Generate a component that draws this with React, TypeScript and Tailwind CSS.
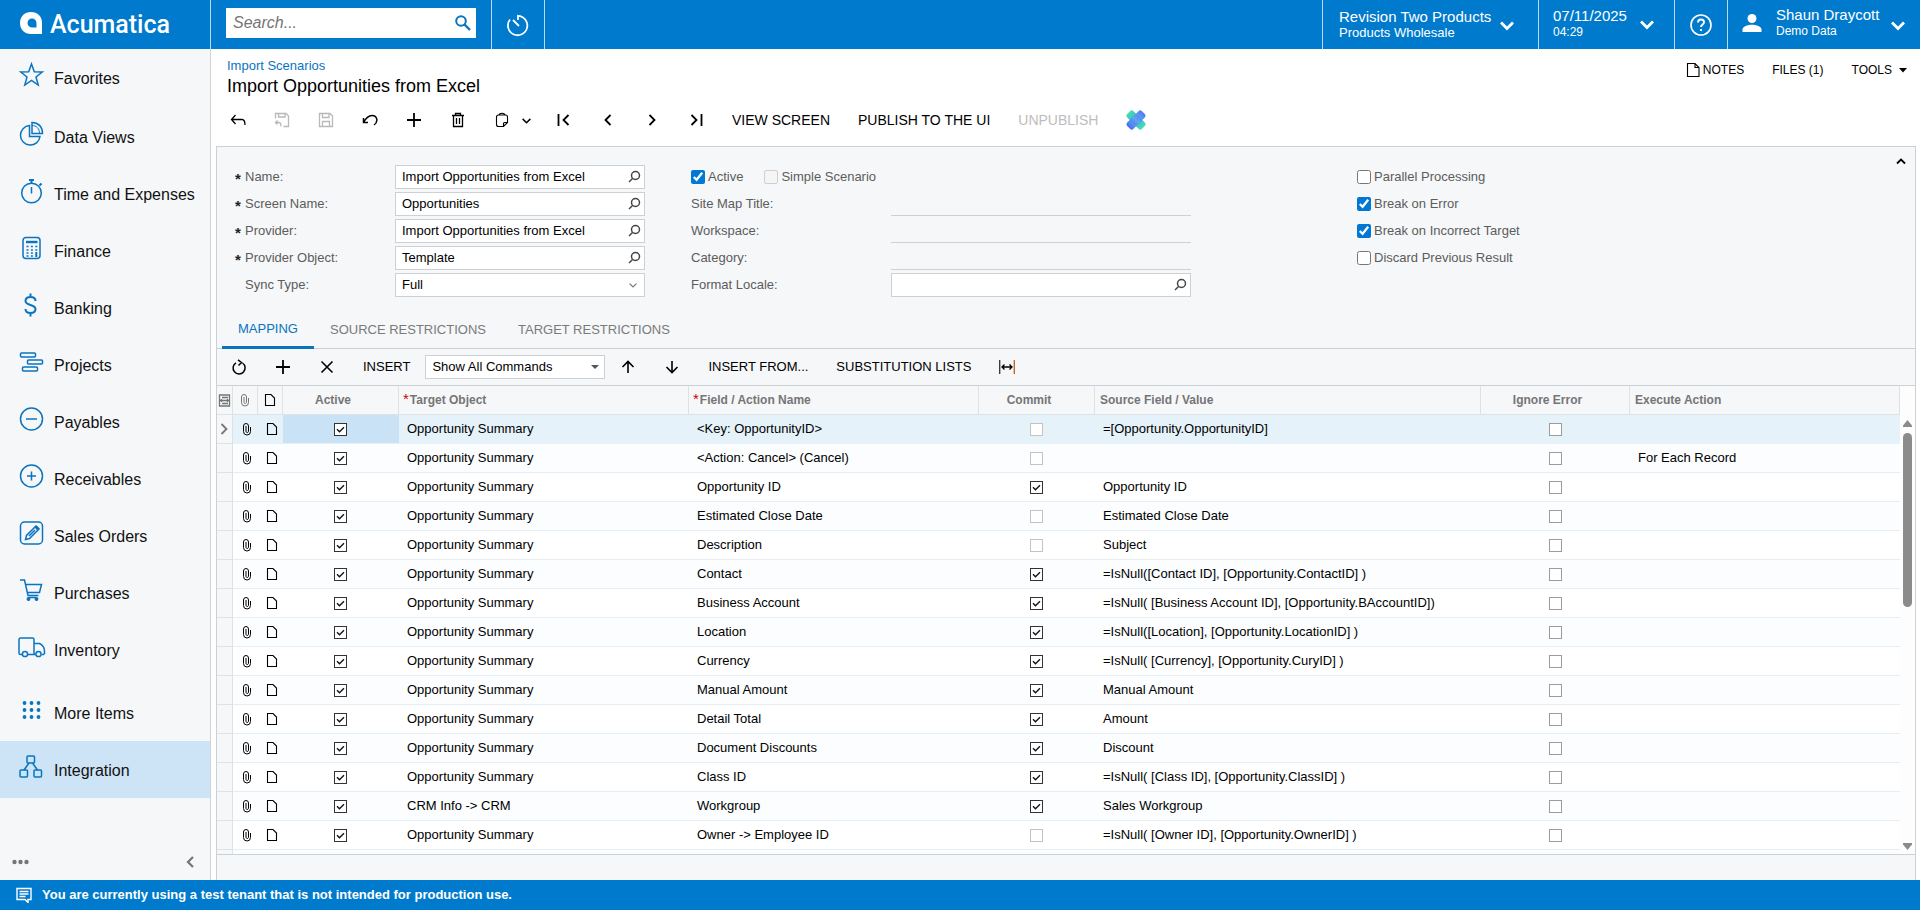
import type { ReactNode } from "react"

type IconProps = { size?: number; width?: number; className?: string; children: ReactNode }

function Icon({ size = 16, width = 1.3, className = "", children }: IconProps) {
  return (
    <svg
      width={size}
      height={size}
      viewBox={`0 0 ${size} ${size}`}
      fill="none"
      stroke="currentColor"
      strokeWidth={width}
      className={`shrink-0 ${className}`}
      aria-hidden="true"
    >
      {children}
    </svg>
  )
}

const ChevronDown = ({ size = 14, width = 2.8 }: { size?: number; width?: number }) => (
  <svg width={size} height={size} viewBox="0 0 14 14" fill="none" stroke="currentColor" strokeWidth={width} className="shrink-0" aria-hidden="true">
    <path d="M1 4.5 7 10.500l6-6" />
  </svg>
)

const LookupIcon = () => (
  <Icon width={1.5} className="text-[#444]">
    <circle cx="9.5" cy="6.5" r="4" />
    <path d="M6.5 9.5 3 13" />
  </Icon>
)

const ClipIcon = () => (
  <Icon width={1}>
    <path d="M4.500 5v5.500a3.500 3.500 0 0 0 7 0V6M4.500 5a2.500 2.500 0 0 1 5 0v5.500a1.300 1.300 0 0 1-2.500 0V5" />
  </Icon>
)

const PageIcon = () => (
  <Icon width={1.1}>
    <path d="M3.500 2.500h5.500l3.500 3.500v7.500h-9z" />
  </Icon>
)

// ---- sidebar ----

type NavItem = { label: string; icon: ReactNode; active?: boolean; space?: string }

const navItems: NavItem[] = [
  {
    label: "Favorites",
    space: "mb-0.5",
    icon: <path d="m13.500 3 2.800 7.700 8 .3-6.300 5 2.200 8-6.700-4.500L6.800 24 9 16l-6.300-5 8-.3z" />,
  },
  {
    label: "Data Views",
    icon: (
      <>
        <path d="M11.500 5.500a9.800 9.800 0 1 0 10.500 11H11.500z" />
        <path d="M14 2.500c6 0 10.500 4 10.500 11H14z" />
        <path d="M14 5.500c4.500 0 7.500 3 7.500 8" strokeWidth="1" />
      </>
    ),
  },
  {
    label: "Time and Expenses",
    icon: (
      <>
        <circle cx="13.500" cy="16" r="9.800" />
        <path d="M13.500 10v6.500" />
        <path d="M11 3h5M13.500 3v3M21.500 8.500l2-2" strokeWidth="2" />
      </>
    ),
  },
  {
    label: "Finance",
    icon: (
      <>
        <rect x="5" y="3.500" width="17" height="21" rx="3" />
        <path d="M8 8h11.500" strokeWidth="2.400" />
        <path d="M8.500 12.500h11M8.500 16h11M8.500 19h7M8.500 22h7" strokeWidth="1.700" strokeDasharray="2 2.400" />
        <path d="M18.300 18v5" strokeWidth="2" />
      </>
    ),
  },
  {
    label: "Banking",
    icon: (
      <path
        d="M12.500 2.500v4M12.500 21.500v4M17.500 10c0-2.500-2-4-5-4s-5 1.500-5 4c0 5 10 3 10 8 0 2.500-2 4-5 4s-5-1.500-5-4"
        strokeWidth="2"
      />
    ),
  },
  {
    label: "Projects",
    icon: (
      <>
        <rect x="2.500" y="5" width="15" height="4" rx="1" />
        <rect x="9.500" y="12" width="15" height="4" rx="1" />
        <rect x="4.500" y="19" width="15" height="4" rx="1" />
      </>
    ),
  },
  {
    label: "Payables",
    icon: (
      <>
        <circle cx="13.500" cy="14" r="11" />
        <path d="M8 14h11" />
      </>
    ),
  },
  {
    label: "Receivables",
    icon: (
      <>
        <circle cx="13.500" cy="14" r="11" />
        <path d="M9 14h9M13.500 9.500v9" />
      </>
    ),
  },
  {
    label: "Sales Orders",
    icon: (
      <>
        <rect x="2.500" y="3" width="22" height="22" rx="4" />
        <path d="m7.500 20.500 1-4 9.500-9.500 3 3-9.500 9.500zM11 17l6-6" />
        <path d="m17.500 7.500 3 3" strokeWidth="3" />
      </>
    ),
  },
  {
    label: "Purchases",
    icon: (
      <>
        <path d="M2 4h4.500l3.500 15.500h10.500M7.500 8.500h16l-2 8H9.500" />
        <circle cx="10.500" cy="23" r="1.200" fill="currentColor" />
        <circle cx="18.500" cy="23" r="1.200" fill="currentColor" />
        <path d="M10.500 21.500h8" />
      </>
    ),
  },
  {
    label: "Inventory",
    space: "mb-1.5",
    icon: (
      <>
        <path d="M4 21.500H2.500a1.500 1.500 0 0 1-1.500-1.500V6.500A1.500 1.500 0 0 1 2.500 5h12A1.500 1.500 0 0 1 16 6.500v15M10 21.500h7.500M16 10.500h5.500c3 1.500 5 4 5 7.500v2.500l-1 1H24" />
        <circle cx="7" cy="21" r="2.600" />
        <circle cx="20.500" cy="21" r="2.600" />
      </>
    ),
  },
  {
    label: "More Items",
    icon: (
      <g fill="currentColor" stroke="none">
        {[7, 14, 21].map((y) => [6.5, 13.5, 20.5].map((x) => <circle key={`${x}-${y}`} cx={x} cy={y} r="1.900" />))}
      </g>
    ),
  },
  {
    label: "Integration",
    active: true,
    icon: (
      <>
        <rect x="9" y="3" width="7.500" height="7" rx="1" />
        <rect x="2" y="17" width="7.500" height="7" rx="1" />
        <rect x="16" y="17" width="7.500" height="7" rx="1" />
        <path d="m11 10-5 7M14.500 10l5 7" />
      </>
    ),
  },
]

function Sidebar() {
  return (
    <nav className="w-[211px] shrink-0 flex flex-col justify-between bg-[#f5f7f9] border-r border-[#cfd3d7]">
      <ul>
        {navItems.map((item) => (
          <li key={item.label} className={item.space}>
            <a
              href="#"
              className={`flex items-center gap-2 h-[57px] pl-[18px] text-base text-[#111] ${item.active ? "bg-[#cce4f6]" : ""}`}
            >
              <Icon size={28} width={1.5} className="text-[#0a74bf] mb-1.5">
                {item.icon}
              </Icon>
              <span className="whitespace-nowrap pt-0.5">{item.label}</span>
            </a>
          </li>
        ))}
      </ul>
      <div className="flex justify-between items-center h-9 pl-3 pr-[13px] text-[#757575]">
        <button aria-label="More">
          <svg width="17" height="6" viewBox="0 0 17 6" fill="currentColor" className="block">
            <circle cx="2.500" cy="3" r="2.200" />
            <circle cx="8.500" cy="3" r="2.200" />
            <circle cx="14.500" cy="3" r="2.200" />
          </svg>
        </button>
        <button aria-label="Collapse menu">
          <Icon size={14} width={2.2}>
            <path d="M10 2 5 7l5 5" />
          </Icon>
        </button>
      </div>
    </nav>
  )
}

// ---- top bar ----

function TopBar() {
  return (
    <header className="flex h-[49px] shrink-0 bg-[#007acc] text-white">
      <a href="#" className="w-[211px] flex items-center gap-2 pl-5 border-r border-[#b5dcf5]">
        <svg width="22" height="22" viewBox="0 0 22 22" className="-mt-1" aria-hidden="true">
          <path
            fill="currentColor"
            fillRule="evenodd"
            d="M11 0c6.500 0 11 4.500 11 10.500V22H11C4.500 22 0 17.500 0 11S4.500 0 11 0zm1 6.500C9.500 6.500 7.500 8.500 7.500 11c0 2.800 2 4.500 5 4.500H16.500V11c0-2.500-2-4.500-4.500-4.500z"
          />
        </svg>
        <span className="font-['Roboto'] font-medium text-[25px] leading-7">Acumatica</span>
      </a>
      <div className="flex items-center w-[281px] pl-[15px] pb-[3px] border-r border-[#b5dcf5]">
        <form className="flex items-center w-[250px] h-[30px] bg-white pl-[7px] pr-1">
          <input
            type="search"
            aria-label="Search"
            placeholder="Search..."
            className="flex-1 min-w-0 text-base italic text-black placeholder:text-[#757575] outline-none"
          />
          <button type="button" aria-label="Search" className="text-[#0a74bf]">
            <Icon size={18} width={2}>
              <circle cx="7" cy="7" r="4.800" />
              <path d="m10.500 10.500 5.500 5.500" strokeWidth="2.400" />
            </Icon>
          </button>
        </form>
      </div>
      <button aria-label="Recent" className="w-[53px] flex items-center justify-center border-r border-[#b5dcf5]">
        <Icon size={24} width={1.8}>
          <path d="M12 7V2.800A9.700 9.700 0 1 1 4 6.500M7 7l6 6" />
        </Icon>
      </button>
      <div className="flex-1" />
      <button className="flex items-center justify-between w-[216px] pl-4 pr-6 border-l border-[#b5dcf5] text-left">
        <span className="whitespace-nowrap">
          <span className="block text-[15px] leading-4">Revision Two Products</span>
          <span className="block text-[13px] leading-4">Products Wholesale</span>
        </span>
        <ChevronDown />
      </button>
      <button className="flex items-center justify-between w-[136px] pl-[14px] pr-5 pb-0.5 border-l border-[#b5dcf5] text-left">
        <span>
          <span className="block text-[15px] leading-[17px]">07/11/2025</span>
          <span className="block text-[12px] leading-[17px]">04:29</span>
        </span>
        <ChevronDown />
      </button>
      <button aria-label="Help" className="w-[53px] flex items-center justify-center border-l border-[#b5dcf5]">
        <Icon size={24} width={1.6}>
          <circle cx="12" cy="12" r="10" />
          <path d="M9 9.500c0-1.900 1.300-3 3-3s3 1.100 3 2.700c0 2.200-3 2.300-3 4.800M12 16v2" strokeWidth="1.900" />
        </Icon>
      </button>
      <button className="flex items-center w-[193px] pl-[14px] pr-[15px] border-l border-[#b5dcf5] text-left">
        <svg width="20" height="20" viewBox="0 0 20 20" fill="currentColor" className="shrink-0 mb-1" aria-hidden="true">
          <circle cx="10" cy="5.500" r="4.500" />
          <path d="M0.500 19v-2.500c0-3 5-4.700 9.500-4.700s9.500 1.700 9.500 4.700V19z" />
        </svg>
        <span className="flex-1 pl-[14px] whitespace-nowrap pb-1">
          <span className="block text-[15px] leading-[17px]">Shaun Draycott</span>
          <span className="block text-[12px] leading-[17px]">Demo Data</span>
        </span>
        <ChevronDown />
      </button>
    </header>
  )
}

// ---- page title and actions ----

type Action = { name: string; icon: ReactNode; disabled?: boolean }

const leadingActions: Action[] = [
  { name: "Back", icon: <path d="M5.500 3 1.500 7.500l4 4.500M1.500 7.500h10.500c2 0 3 1.500 3 5.500" /> },
  {
    name: "Save and close",
    disabled: true,
    icon: <path d="M1.500 6.500v-5h10.500l2.500 2.500v10.500H9.500M4.500 1.500v3.500h6.500v-3.500M3.500 8.500l-2 2 2 2M1.500 10.500h3.500c1.500 0 2 1.500 2 4" />,
  },
  {
    name: "Save",
    disabled: true,
    icon: <path d="M1.500 1.500h10.500l2.500 2.500v10.500h-13zM4.500 1.500v4h6.500v-4M4.500 14.500V9.500h7v5" />,
  },
  { name: "Undo", icon: <path d="M1.500 6v4.500h4.500M1.500 10.500C4 6 6.500 3.500 10 3.500c5.500 0 6.500 6.500 2 9.500" strokeWidth="1.500" /> },
  { name: "Add", icon: <path d="M8 1v14M1 8h14" strokeWidth="1.800" /> },
  { name: "Delete", icon: <path d="M2 3.500h12M5.500 3.500v-2h5v2M3.500 3.500v11h9v-11M6.500 6v6M9.500 6v6" /> },
]

const pagingActions: Action[] = [
  { name: "First", icon: <path d="M2.500 2v12M12.500 3l-5 5 5 5" strokeWidth="1.800" /> },
  { name: "Previous", icon: <path d="m10.500 3-5 5 5 5" strokeWidth="1.800" /> },
  { name: "Next", icon: <path d="m5.500 3 5 5-5 5" strokeWidth="1.800" /> },
  { name: "Last", icon: <path d="M13.500 2v12M3.500 3l5 5-5 5" strokeWidth="1.800" /> },
]

function IconButton({ name, icon, disabled }: Action) {
  return (
    <button
      aria-label={name}
      disabled={disabled}
      className="w-11 h-9 shrink-0 flex items-center justify-center disabled:text-[#b9b9b9]"
    >
      <Icon>{icon}</Icon>
    </button>
  )
}

function PageHeader() {
  return (
    <div className="pt-2 pb-1 pl-[5px]">
      <div className="flex justify-between pl-[11px] pr-[13px]">
        <div>
          <a href="#" className="block w-fit text-[13px] leading-[17px] text-[#0a74bf]">
            Import Scenarios
          </a>
          <h1 className="text-lg leading-6">Import Opportunities from Excel</h1>
        </div>
        <div className="flex items-center gap-7 h-4 mt-[5px] text-[12px]">
          <button className="flex items-center gap-px">
            <Icon width={1.1}>
              <path d="M1.500 1.500h7.500l4 4v9H1.500zM9 1.500v4h4" />
            </Icon>
            NOTES
          </button>
          <button>FILES (1)</button>
          <button className="flex items-center gap-[7px]">
            TOOLS
            <svg width="8" height="5" viewBox="0 0 8 5" fill="currentColor" aria-hidden="true">
              <path d="M0 0h8L4 4.500z" />
            </svg>
          </button>
        </div>
      </div>
      <div className="flex items-center h-11 text-sm whitespace-nowrap">
        {leadingActions.map((action) => (
          <IconButton key={action.name} {...action} />
        ))}
        <button aria-label="Clipboard" className="w-[62px] h-9 flex items-center gap-[11px] pl-[15px]">
          <Icon width={1.1}>
            <path d="M8.500 14.500H3.500a2 2 0 0 1-2-2V5a2 2 0 0 1 2-2h7a2 2 0 0 1 2 2v5.500zM8.500 14.500v-3a1 1 0 0 1 1-1h3M4 3.500c0-3 6-3 6 0" />
          </Icon>
          <ChevronDown size={9} width={2.3} />
        </button>
        {pagingActions.map((action) => (
          <IconButton key={action.name} {...action} />
        ))}
        <button className="px-[14px]">VIEW SCREEN</button>
        <button className="px-[14px]">PUBLISH TO THE UI</button>
        <button disabled className="px-[14px] text-[#bdbdbd]">
          UNPUBLISH
        </button>
        <button aria-label="Assistant" className="w-12 flex justify-center">
          <svg width="22" height="22" viewBox="0 0 22 22" aria-hidden="true">
            <defs>
              <linearGradient id="teal">
                <stop offset="0" stopColor="#3fe8a4" />
                <stop offset="0.500" stopColor="#4a9fe6" />
                <stop offset="1" stopColor="#3fe8b0" />
              </linearGradient>
              <linearGradient id="blue">
                <stop offset="0" stopColor="#2f5ff0" />
                <stop offset="0.500" stopColor="#62a4f2" />
                <stop offset="1" stopColor="#3a6df0" />
              </linearGradient>
            </defs>
            <rect x="0.500" y="6.500" width="21" height="9" rx="2.500" fill="url(#teal)" transform="rotate(45 11 11)" />
            <rect x="0.500" y="6.500" width="21" height="9" rx="2.500" fill="url(#blue)" fillOpacity="0.900" transform="rotate(-45 11 11)" />
          </svg>
        </button>
      </div>
    </div>
  )
}

// ---- summary form ----

function Label({ id, text }: { id: string; text: string }) {
  return (
    <label htmlFor={id} className="flex h-6 items-center text-[#5c5c5c]">
      {text}
    </label>
  )
}

function Lookup({ id, value }: { id: string; value: string }) {
  return (
    <div className="flex items-center h-6 bg-white border border-[#ccd1d6] pl-1.5 pr-0.5">
      <input id={id} defaultValue={value} className="flex-1 min-w-0 outline-none" />
      <button aria-label="Look up">
        <LookupIcon />
      </button>
    </div>
  )
}

function Check({ id, text, checked, disabled }: { id: string; text: string; checked?: boolean; disabled?: boolean }) {
  return (
    <div className="flex items-center h-6 gap-[3px]">
      <input id={id} type="checkbox" defaultChecked={checked} disabled={disabled} className="size-[14px] accent-[#0078d4]" />
      <label htmlFor={id} className="text-[#5c5c5c] whitespace-nowrap">
        {text}
      </label>
    </div>
  )
}

const lookups = [
  { id: "name", label: "Name:", value: "Import Opportunities from Excel" },
  { id: "screen", label: "Screen Name:", value: "Opportunities" },
  { id: "provider", label: "Provider:", value: "Import Opportunities from Excel" },
  { id: "object", label: "Provider Object:", value: "Template" },
]

const readOnlyFields = [
  { id: "siteMapTitle", label: "Site Map Title:" },
  { id: "workspace", label: "Workspace:" },
  { id: "category", label: "Category:" },
]

function SummaryForm() {
  return (
    <section className="flex text-[13px] pt-[18px] pl-[18px]">
      <div className="grid grid-cols-[10px_150px_250px] auto-rows-[24px] gap-y-[3px] mr-[46px]">
        {lookups.map((f) => (
          <div key={f.id} className="contents">
            <span className="flex h-6 items-center pt-1 font-bold text-[15px] text-[#222]" aria-hidden="true">
              *
            </span>
            <Label id={f.id} text={f.label} />
            <Lookup id={f.id} value={f.value} />
          </div>
        ))}
        <span />
        <Label id="sync" text="Sync Type:" />
        <div className="relative">
          <select id="sync" className="appearance-none w-full h-6 bg-white border border-[#ccd1d6] px-1.5 outline-none">
            <option>Full</option>
          </select>
          <span className="absolute right-2 top-2 text-[#777] pointer-events-none">
            <ChevronDown size={8} width={2} />
          </span>
        </div>
      </div>
      <div className="grid grid-cols-[200px_300px] auto-rows-[24px] gap-y-[3px] mr-[166px]">
        <div className="col-span-2 flex gap-[21px]">
          <Check id="active" text="Active" checked />
          <Check id="simple" text="Simple Scenario" disabled />
        </div>
        {readOnlyFields.map((f) => (
          <div key={f.id} className="contents">
            <Label id={f.id} text={f.label} />
            <input id={f.id} readOnly className="h-6 border-b border-[#ccd1d6] outline-none" />
          </div>
        ))}
        <Label id="locale" text="Format Locale:" />
        <Lookup id="locale" value="" />
      </div>
      <div className="flex flex-col gap-[3px]">
        <Check id="parallel" text="Parallel Processing" />
        <Check id="breakError" text="Break on Error" checked />
        <Check id="breakTarget" text="Break on Incorrect Target" checked />
        <Check id="discard" text="Discard Previous Result" />
      </div>
      <button aria-label="Collapse" className="ml-auto mr-[9px] -mt-2.5 h-3">
        <Icon size={10} width={1.8}>
          <path d="M1 7.500 5 3.500l4 4" />
        </Icon>
      </button>
    </section>
  )
}

// ---- mapping grid ----

type Row = { object?: string; field: string; commit?: boolean; source?: string; action?: string }

const rows: Row[] = [
  { field: "<Key: OpportunityID>", source: "=[Opportunity.OpportunityID]" },
  { field: "<Action: Cancel> (Cancel)", action: "For Each Record" },
  { field: "Opportunity ID", commit: true, source: "Opportunity ID" },
  { field: "Estimated Close Date", source: "Estimated Close Date" },
  { field: "Description", source: "Subject" },
  { field: "Contact", commit: true, source: "=IsNull([Contact ID], [Opportunity.ContactID] )" },
  { field: "Business Account", commit: true, source: "=IsNull( [Business Account ID], [Opportunity.BAccountID])" },
  { field: "Location", commit: true, source: "=IsNull([Location], [Opportunity.LocationID] )" },
  { field: "Currency", commit: true, source: "=IsNull( [Currency], [Opportunity.CuryID] )" },
  { field: "Manual Amount", commit: true, source: "Manual Amount" },
  { field: "Detail Total", commit: true, source: "Amount" },
  { field: "Document Discounts", commit: true, source: "Discount" },
  { field: "Class ID", commit: true, source: "=IsNull( [Class ID], [Opportunity.ClassID] )" },
  { object: "CRM Info -> CRM", field: "Workgroup", commit: true, source: "Sales Workgroup" },
  { field: "Owner -> Employee ID", source: "=IsNull( [Owner ID], [Opportunity.OwnerID] )" },
]

function GridCheck({ label, checked, faint }: { label: string; checked?: boolean; faint?: boolean }) {
  const border = checked ? "border-[#333]" : faint ? "border-[#c3c3c3]" : "border-[#9c9c9c]"
  return (
    <span className="relative block size-[13px] mx-auto">
      <input type="checkbox" aria-label={label} defaultChecked={checked} className={`appearance-none block size-[13px] bg-white border ${border}`} />
      {checked && (
        <svg width="13" height="13" viewBox="0 0 13 13" className="absolute inset-0 pointer-events-none" fill="none" stroke="#111" strokeWidth="1.400">
          <path d="m3 6.300 2.500 2.500 4.500-4.500" />
        </svg>
      )}
    </span>
  )
}

function GridToolbar() {
  return (
    <div className="flex items-center h-[37px] shrink-0 border-b border-[#ccd1d6] text-[13px] whitespace-nowrap">
      <IconButton name="Refresh" icon={<path d="M5 3.800a6 6 0 1 0 6.500.2M7 .8l3.500 2.700L7.500 6.500" strokeWidth="1.500" />} />
      <IconButton name="Add row" icon={<path d="M8 1v14M1 8h14" strokeWidth="1.800" />} />
      <IconButton name="Delete row" icon={<path d="m2.500 2.500 11 11M13.500 2.500l-11 11" strokeWidth="1.600" />} />
      <button className="px-[14px]">INSERT</button>
      <div className="relative mx-px">
        <select aria-label="Commands" className="appearance-none block w-[180px] h-6 bg-white border border-[#ccd1d6] px-1.5 outline-none">
          <option>Show All Commands</option>
        </select>
        <svg width="8" height="4" viewBox="0 0 8 4" fill="#555" className="absolute right-1.5 top-2.5 pointer-events-none">
          <path d="M0 0h8L4 4z" />
        </svg>
      </div>
      <IconButton name="Move up" icon={<path d="M8 14V2.500M2.500 8 8 2.500 13.500 8" strokeWidth="1.600" />} />
      <IconButton name="Move down" icon={<path d="M8 2v11.500M2.500 8 8 13.500 13.500 8" strokeWidth="1.600" />} />
      <button className="px-[14px]">INSERT FROM...</button>
      <button className="px-[14px]">SUBSTITUTION LISTS</button>
      <IconButton
        name="Fit columns"
        icon={
          <>
            <path d="M0.700 1v14" stroke="#333" />
            <path d="M15.300 1v14" stroke="#b5651d" />
            <path d="M3 8h10M5.500 5.500 3 8l2.500 2.500M10.500 5.500 13 8l-2.500 2.500" />
          </>
        }
      />
    </div>
  )
}

const Required = () => <span className="text-[#d40000] font-normal text-[15px] leading-3 mr-px">*</span>

function MappingGrid() {
  const th = "h-[29px] p-0 border-b border-r border-[#dde2e6] bg-[#f5f7f9] font-bold"
  const gutter = "p-0 border-b border-r border-[#dde2e6] bg-[#f5f7f9]"
  return (
    <div className="flex flex-1 min-h-0 bg-white">
      <div className="flex-1 overflow-hidden">
        <table className="w-full table-fixed border-separate border-spacing-0 text-[13px] whitespace-nowrap">
          <colgroup>
            <col className="w-[16px]" />
            <col className="w-[25px]" />
            <col className="w-[25px]" />
            <col className="w-[116px]" />
            <col className="w-[290px]" />
            <col className="w-[290px]" />
            <col className="w-[116px]" />
            <col className="w-[386px]" />
            <col className="w-[149px]" />
            <col />
          </colgroup>
          <thead className="text-[12px] text-[#757575] text-left">
            <tr>
              <th className={th}>
                <Icon size={13} width={1.3} className="ml-px">
                  <path d="M1.500 1h10v11h-10zM4 3.500h6M1.500 6.500h10M4 9.500h6" />
                  <path d="M3.500 5v3M9.500 5v3" />
                </Icon>
              </th>
              <th className={th}>
                <span className="flex justify-center">
                  <ClipIcon />
                </span>
              </th>
              <th className={th}>
                <span className="flex justify-center text-black">
                  <PageIcon />
                </span>
              </th>
              <th className={`${th} text-center`}>
                <span className="pr-[15px]">Active</span>
              </th>
              <th className={`${th} pl-1`}>
                <Required />
                Target Object
              </th>
              <th className={`${th} pl-1`}>
                <Required />
                Field / Action Name
              </th>
              <th className={`${th} text-center`}>
                <span className="pr-[15px]">Commit</span>
              </th>
              <th className={th}>
                <span className="pl-[5px]">Source Field / Value</span>
              </th>
              <th className={`${th} text-center`}>
                <span className="pr-[15px]">Ignore Error</span>
              </th>
              <th className={th}>
                <span className="pl-[5px]">Execute Action</span>
              </th>
            </tr>
          </thead>
          <tbody>
            {rows.map((row, i) => {
              const selected = i === 0
              const shade = selected ? "bg-[#e5f2fa]" : i % 2 ? "bg-[#fbfdfe]" : "bg-white"
              const td = `p-0 border-b ${selected ? "border-[#e5f2fa]" : "border-[#e6eef5]"}`
              return (
                <tr key={row.field} className={`h-[29px] ${shade}`}>
                  <td className={gutter}>
                    {selected && (
                      <Icon size={14} width={1.8} className="text-[#777]">
                        <path d="m4.500 2 5 5-5 5" />
                      </Icon>
                    )}
                  </td>
                  <td className={td}>
                    <button aria-label="Files" className="block ml-1.5">
                      <ClipIcon />
                    </button>
                  </td>
                  <td className={td}>
                    <button aria-label="Notes" className="block ml-1.5">
                      <PageIcon />
                    </button>
                  </td>
                  <td className={`${td} pr-0.5 ${selected ? "bg-[#c9e2f5]" : ""}`}>
                    <GridCheck label="Active" checked />
                  </td>
                  <td className={td}>
                    <span className="pl-2">{row.object ?? "Opportunity Summary"}</span>
                  </td>
                  <td className={td}>
                    <span className="pl-2">{row.field}</span>
                  </td>
                  <td className={`${td} pr-0.5`}>
                    <GridCheck label="Commit" checked={row.commit} faint />
                  </td>
                  <td className={td}>
                    <span className="pl-2">{row.source}</span>
                  </td>
                  <td className={td}>
                    <GridCheck label="Ignore Error" />
                  </td>
                  <td className={td}>
                    <span className="pl-2">{row.action}</span>
                  </td>
                </tr>
              )
            })}
            <tr className="h-[29px] bg-[#fbfdfe]">
              <td className={gutter} />
              <td colSpan={9} />
            </tr>
          </tbody>
        </table>
      </div>
      <div className="w-[15px] flex flex-col items-center text-[#8b8b8b] pt-[34px] pb-1 bg-[#fdfdfd]">
        <svg width="9" height="7" viewBox="0 0 9 7" fill="currentColor" className="shrink-0">
          <path d="M4.500 0 9 5.500V7H0V5.500z" />
        </svg>
        <div className="w-[9px] h-[174px] mt-1.5 rounded-full bg-[#8b8b8b]" />
        <svg width="9" height="7" viewBox="0 0 9 7" fill="currentColor" className="mt-auto shrink-0">
          <path d="M0 0h9v1.500L4.500 7 0 1.500z" />
        </svg>
      </div>
    </div>
  )
}

function Tabs() {
  return (
    <div role="tablist" className="flex items-end h-[52px] shrink-0 pl-[5px] border-b border-[#ccd1d6] text-[13px] text-[#7a7a7a]">
      <button role="tab" aria-selected="true" className="h-[38px] px-4 -mb-px border-b-[3px] border-[#0a74bf] text-[#0a74bf]">
        MAPPING
      </button>
      <button role="tab" className="h-9 px-4">
        SOURCE RESTRICTIONS
      </button>
      <button role="tab" className="h-9 px-4">
        TARGET RESTRICTIONS
      </button>
    </div>
  )
}

export default function App() {
  return (
    <div className="h-screen flex flex-col bg-white text-black font-['Liberation_Sans',Arial,sans-serif]">
      <TopBar />
      <div className="flex flex-1 min-h-0">
        <Sidebar />
        <main className="flex-1 min-w-0 flex flex-col">
          <PageHeader />
          <div className="flex-1 min-h-0 flex flex-col ml-[5px] mr-1 border border-b-0 border-[#ccd1d6] bg-[#f5f7f9]">
            <SummaryForm />
            <Tabs />
            <GridToolbar />
            <MappingGrid />
            <div className="h-[26px] shrink-0 border-t border-[#ccd1d6]" />
          </div>
        </main>
      </div>
      <footer className="flex items-center gap-2.5 h-[30px] shrink-0 pl-4 bg-[#007acc] text-white text-[13px] font-bold">
        <Icon width={1.4}>
          <path d="M1 1.500h14v11h-3v3l-3-3H1zM3.500 4.500h9M3.500 7h9M3.500 9.500h6" />
        </Icon>
        You are currently using a test tenant that is not intended for production use.
      </footer>
    </div>
  )
}
